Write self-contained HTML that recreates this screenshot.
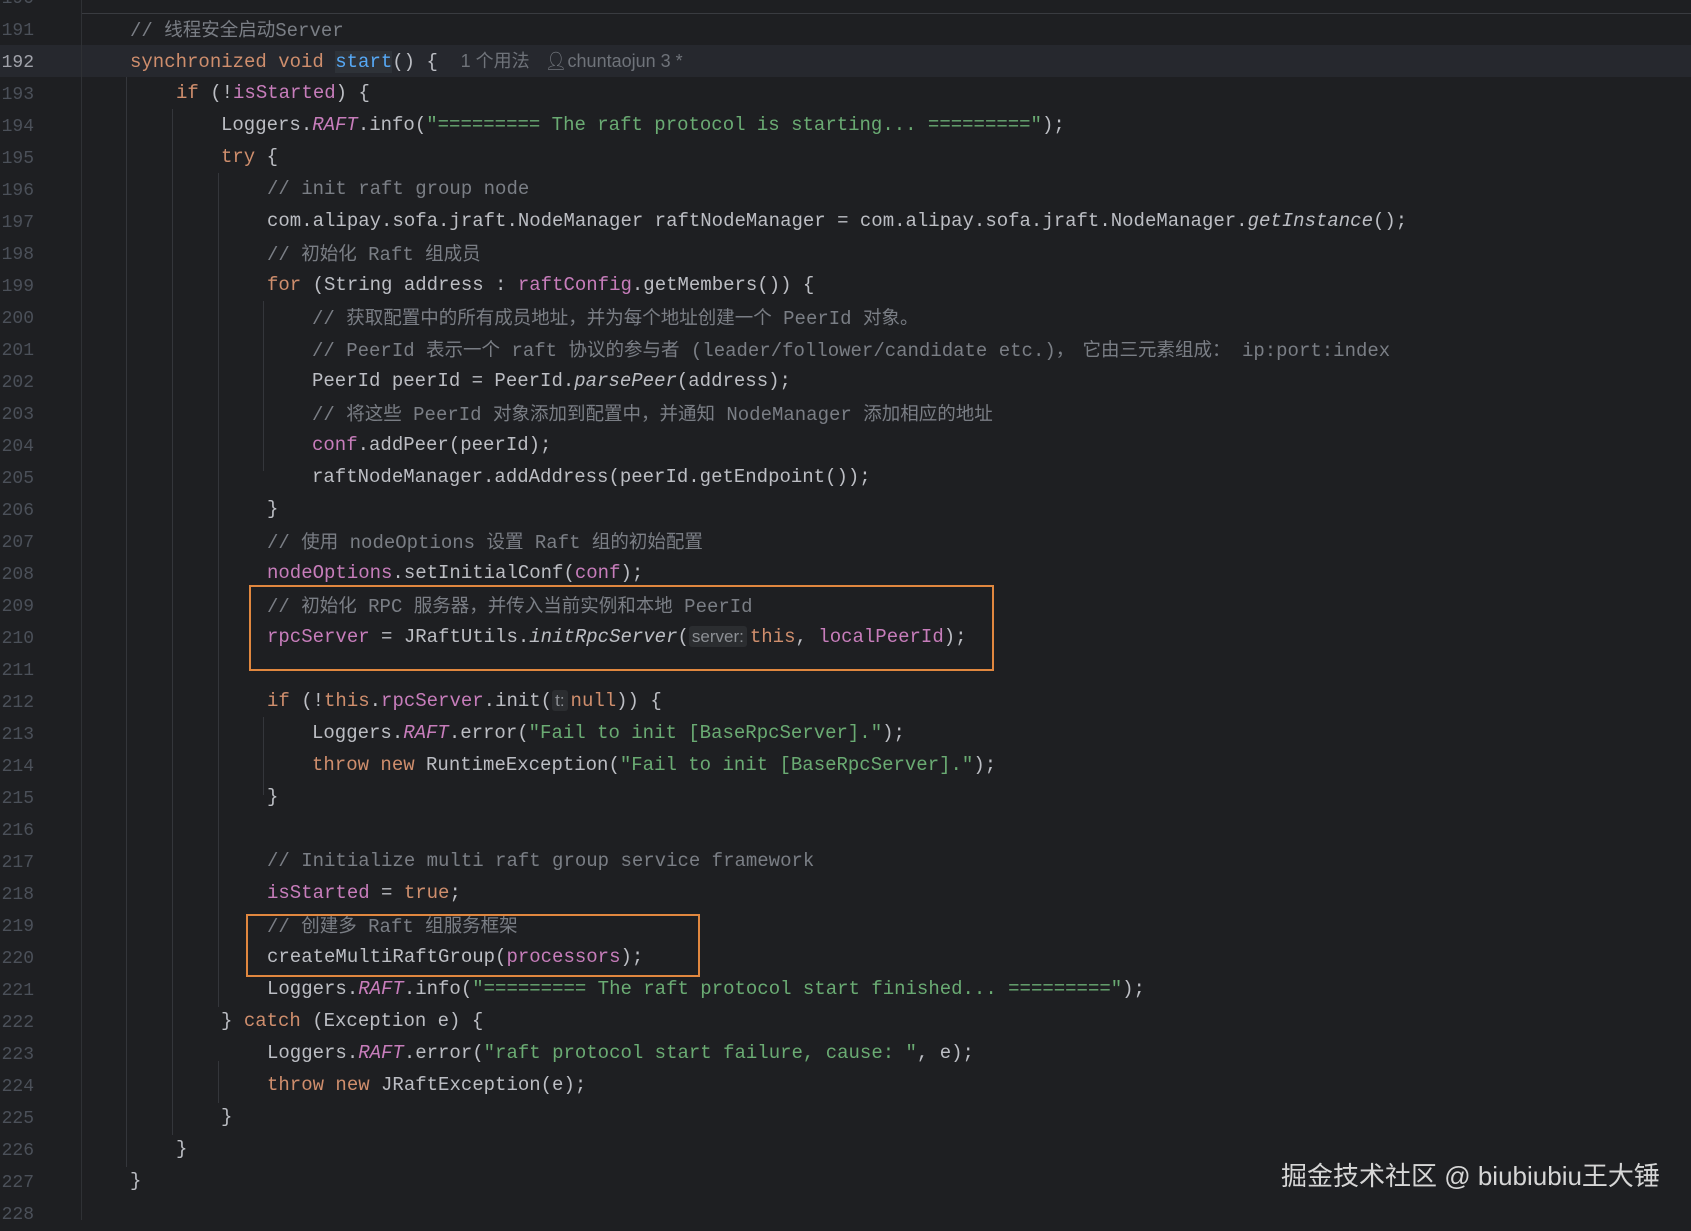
<!DOCTYPE html>
<html><head><meta charset="utf-8"><style>
html,body{margin:0;padding:0;}
body{width:1691px;height:1220px;background:#1e1f22;position:relative;overflow:hidden;font-family:"Liberation Mono","Noto Sans CJK SC",monospace;font-size:19px;color:#bcbec4;}
.gut{position:absolute;left:81px;top:0;width:1px;height:1220px;background:#2f3135;}
.sep{position:absolute;left:82px;right:0;top:13px;height:1px;background:#393b40;}
.cur{position:absolute;left:0;right:0;top:45px;height:32px;background:#26282e;}
.n{position:absolute;left:0;width:34px;text-align:right;color:#4b5059;font-size:18px;line-height:32px;margin-top:2px;}
.l{position:absolute;white-space:pre;line-height:32px;}
.g{position:absolute;width:1px;background:#34363b;}
.k{color:#cf8e6d}.f{color:#c77dbb}.s{color:#6aab73}.c{color:#7a7e85}.m{color:#56a8f5}.i{font-style:italic}
.z{font-family:"Noto Sans CJK SC",sans-serif;font-size:18.5px;}
.h{font-family:"Liberation Sans",sans-serif;font-size:17px;color:#8c8f94;background:#2b2d30;border-radius:3px;padding:1px 3px;margin-right:3px;}
.hint{font-family:"Liberation Sans","Noto Sans CJK SC",sans-serif;font-size:18px;color:#6f737a;}
.box{position:absolute;border:2px solid #e0873f;}
.wm{position:absolute;left:1281px;top:1156px;font-family:"Liberation Sans","Noto Sans CJK SC",sans-serif;font-size:26px;color:#d6d6d6;white-space:nowrap;}
</style></head><body>
<div class="cur"></div>
<div class="gut"></div>
<div class="sep"></div>
<div class="g" style="left:126px;top:77px;height:1090px"></div>
<div class="g" style="left:172px;top:109px;height:1026px"></div>
<div class="g" style="left:218px;top:173px;height:834px"></div>
<div class="g" style="left:218px;top:1061px;height:42px"></div>
<div class="g" style="left:263px;top:301px;height:170px"></div>
<div class="g" style="left:263px;top:717px;height:78px"></div>

<div class="n" style="top:-19px">190</div>
<div class="n" style="top:13px">191</div>
<div class="n" style="top:45px;color:#a1a3ab">192</div>
<div class="n" style="top:77px">193</div>
<div class="n" style="top:109px">194</div>
<div class="n" style="top:141px">195</div>
<div class="n" style="top:173px">196</div>
<div class="n" style="top:205px">197</div>
<div class="n" style="top:237px">198</div>
<div class="n" style="top:269px">199</div>
<div class="n" style="top:301px">200</div>
<div class="n" style="top:333px">201</div>
<div class="n" style="top:365px">202</div>
<div class="n" style="top:397px">203</div>
<div class="n" style="top:429px">204</div>
<div class="n" style="top:461px">205</div>
<div class="n" style="top:493px">206</div>
<div class="n" style="top:525px">207</div>
<div class="n" style="top:557px">208</div>
<div class="n" style="top:589px">209</div>
<div class="n" style="top:621px">210</div>
<div class="n" style="top:653px">211</div>
<div class="n" style="top:685px">212</div>
<div class="n" style="top:717px">213</div>
<div class="n" style="top:749px">214</div>
<div class="n" style="top:781px">215</div>
<div class="n" style="top:813px">216</div>
<div class="n" style="top:845px">217</div>
<div class="n" style="top:877px">218</div>
<div class="n" style="top:909px">219</div>
<div class="n" style="top:941px">220</div>
<div class="n" style="top:973px">221</div>
<div class="n" style="top:1005px">222</div>
<div class="n" style="top:1037px">223</div>
<div class="n" style="top:1069px">224</div>
<div class="n" style="top:1101px">225</div>
<div class="n" style="top:1133px">226</div>
<div class="n" style="top:1165px">227</div>
<div class="n" style="top:1197px">228</div>

<div class="l" style="top:13px;left:130px"><span class="c">// <span class="z">线程安全启动</span>Server</span></div>
<div class="l" style="top:45px;left:130px"><span class="k">synchronized void </span><span class="m" style="background:#2e3238">start</span>() {  <span class="hint">1 个用法   &#x1F464;&#xFE0E;</span><span class="hint">chuntaojun 3 *</span></div>
<div class="l" style="top:77px;left:176px"><span class="k">if</span> (!<span class="f">isStarted</span>) {</div>
<div class="l" style="top:109px;left:221px">Loggers.<span class="f i">RAFT</span>.info(<span class="s">"========= The raft protocol is starting... ========="</span>);</div>
<div class="l" style="top:141px;left:221px"><span class="k">try</span> {</div>
<div class="l" style="top:173px;left:267px"><span class="c">// init raft group node</span></div>
<div class="l" style="top:205px;left:267px">com.alipay.sofa.jraft.NodeManager raftNodeManager = com.alipay.sofa.jraft.NodeManager.<span class="i">getInstance</span>();</div>
<div class="l" style="top:237px;left:267px"><span class="c">// <span class="z">初始化</span> Raft <span class="z">组成员</span></span></div>
<div class="l" style="top:269px;left:267px"><span class="k">for</span> (String address : <span class="f">raftConfig</span>.getMembers()) {</div>
<div class="l" style="top:301px;left:312px"><span class="c">// <span class="z">获取配置中的所有成员地址，并为每个地址创建一个</span> PeerId <span class="z">对象。</span></span></div>
<div class="l" style="top:333px;left:312px"><span class="c">// PeerId <span class="z">表示一个</span> raft <span class="z">协议的参与者</span> (leader/follower/candidate etc.)<span class="z">，  它由三元素组成：</span> ip:port:index</span></div>
<div class="l" style="top:365px;left:312px">PeerId peerId = PeerId.<span class="i">parsePeer</span>(address);</div>
<div class="l" style="top:397px;left:312px"><span class="c">// <span class="z">将这些</span> PeerId <span class="z">对象添加到配置中，并通知</span> NodeManager <span class="z">添加相应的地址</span></span></div>
<div class="l" style="top:429px;left:312px"><span class="f">conf</span>.addPeer(peerId);</div>
<div class="l" style="top:461px;left:312px">raftNodeManager.addAddress(peerId.getEndpoint());</div>
<div class="l" style="top:493px;left:267px">}</div>
<div class="l" style="top:525px;left:267px"><span class="c">// <span class="z">使用</span> nodeOptions <span class="z">设置</span> Raft <span class="z">组的初始配置</span></span></div>
<div class="l" style="top:557px;left:267px"><span class="f">nodeOptions</span>.setInitialConf(<span class="f">conf</span>);</div>
<div class="l" style="top:589px;left:267px"><span class="c">// <span class="z">初始化</span> RPC <span class="z">服务器，并传入当前实例和本地</span> PeerId</span></div>
<div class="l" style="top:621px;left:267px"><span class="f">rpcServer</span> = JRaftUtils.<span class="i">initRpcServer</span>(<span class="h">server:</span><span class="k">this</span>, <span class="f">localPeerId</span>);</div>
<div class="l" style="top:685px;left:267px"><span class="k">if</span> (!<span class="k">this</span>.<span class="f">rpcServer</span>.init(<span class="h">t:</span><span class="k">null</span>)) {</div>
<div class="l" style="top:717px;left:312px">Loggers.<span class="f i">RAFT</span>.error(<span class="s">"Fail to init [BaseRpcServer]."</span>);</div>
<div class="l" style="top:749px;left:312px"><span class="k">throw new</span> RuntimeException(<span class="s">"Fail to init [BaseRpcServer]."</span>);</div>
<div class="l" style="top:781px;left:267px">}</div>
<div class="l" style="top:845px;left:267px"><span class="c">// Initialize multi raft group service framework</span></div>
<div class="l" style="top:877px;left:267px"><span class="f">isStarted</span> = <span class="k">true</span>;</div>
<div class="l" style="top:909px;left:267px"><span class="c">// <span class="z">创建多</span> Raft <span class="z">组服务框架</span></span></div>
<div class="l" style="top:941px;left:267px">createMultiRaftGroup(<span class="f">processors</span>);</div>
<div class="l" style="top:973px;left:267px">Loggers.<span class="f i">RAFT</span>.info(<span class="s">"========= The raft protocol start finished... ========="</span>);</div>
<div class="l" style="top:1005px;left:221px">} <span class="k">catch</span> (Exception e) {</div>
<div class="l" style="top:1037px;left:267px">Loggers.<span class="f i">RAFT</span>.error(<span class="s">"raft protocol start failure, cause: "</span>, e);</div>
<div class="l" style="top:1069px;left:267px"><span class="k">throw new</span> JRaftException(e);</div>
<div class="l" style="top:1101px;left:221px">}</div>
<div class="l" style="top:1133px;left:176px">}</div>
<div class="l" style="top:1165px;left:130px">}</div>

<div class="box" style="left:249px;top:585px;width:741px;height:82px"></div>
<div class="box" style="left:246px;top:914px;width:450px;height:59px"></div>

<div class="wm">掘金技术社区 @ biubiubiu王大锤</div>
</body></html>
